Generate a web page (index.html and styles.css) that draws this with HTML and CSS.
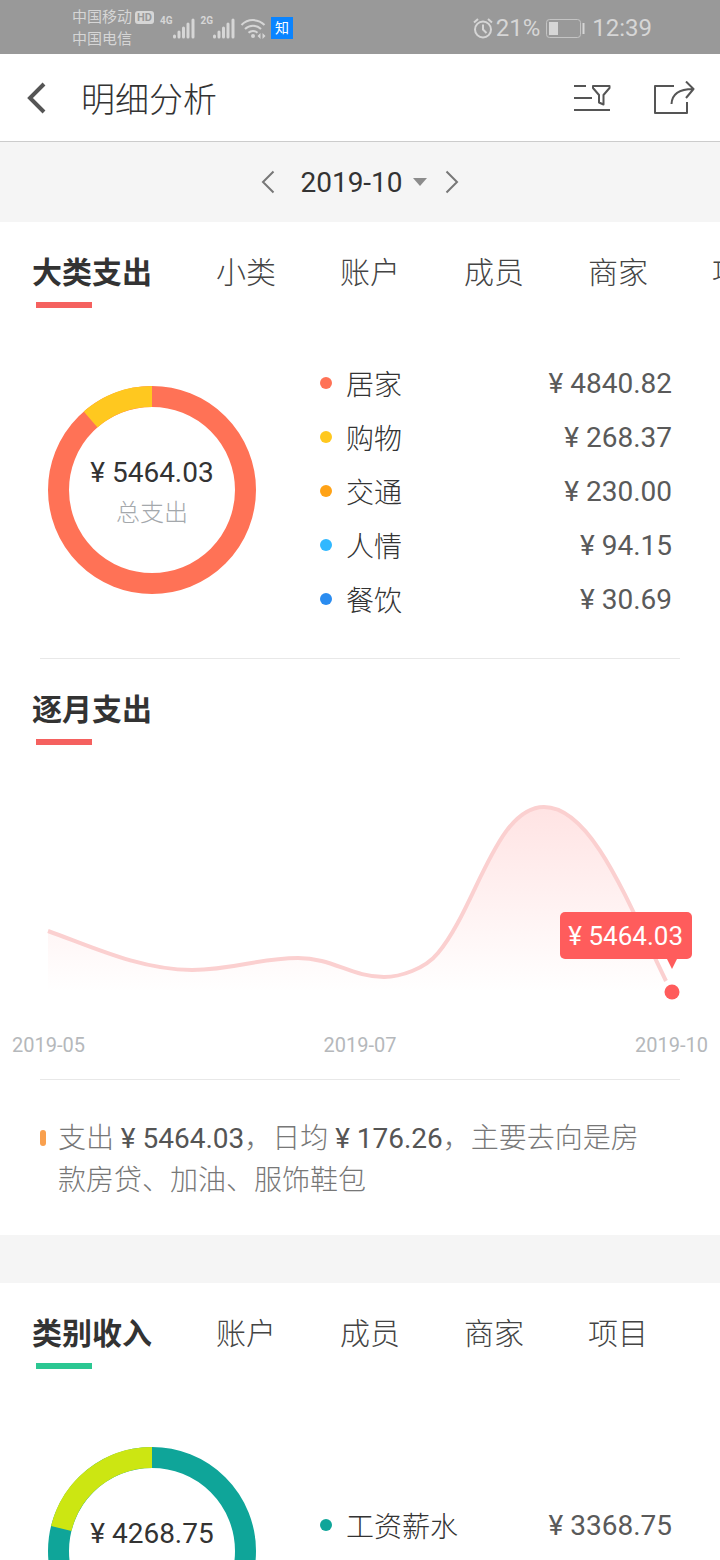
FILE: index.html
```html
<!DOCTYPE html>
<html lang="zh-CN">
<head>
  <meta charset="UTF-8" />
  <meta name="viewport" content="width=device-width, initial-scale=1" />
  <title>明细分析</title>
  <link rel="stylesheet" href="styles.css">
</head>
<body>
<div class="screen">

  <!-- Status bar -->
  <div class="status-bar">
    <div class="carriers">
      <span>中国移动</span>
      <span>中国电信</span>
    </div>
    <span class="hd">HD</span>
    <span class="net">4G</span>
    <svg class="signal" width="22" height="21" viewBox="0 0 22 21">
      <path d="M1.5 18v1M6 14v5M10.500 10v9M15 6v13M20 2v17" />
    </svg>
    <span class="net net-second">2G</span>
    <svg class="signal" width="22" height="21" viewBox="0 0 22 21">
      <path d="M1.5 18v1M6 14v5M10.500 10v9M15 6v13M20 2v17" />
    </svg>
    <svg class="wifi" width="26" height="21" viewBox="0 0 26 21">
      <path class="wifi-arc" d="M1.500 7a16 16 0 0 1 23 0M5 11a11.500 11.500 0 0 1 16 0M8.500 14.800a6.500 6.500 0 0 1 9 0" />
      <circle cx="13" cy="18" r="2" />
      <path d="M20.500 15v6l-3-3zM22.500 15v6l3-3z" />
    </svg>
    <span class="app-badge">知</span>

    <div class="status-right">
      <svg class="alarm" width="20" height="21" viewBox="0 0 20 21">
        <circle cx="10" cy="11.500" r="8" />
        <path d="M10 6.500v5l3.500 3.500M1 4.500l4-3.500M19 4.500l-4-3.500" />
      </svg>
      <span class="percent">21%</span>
      <svg class="battery" width="39" height="19" viewBox="0 0 39 19">
        <rect class="battery-body" x="0.500" y="0.500" width="34" height="18" rx="3" />
        <rect class="battery-level" x="3" y="3" width="9" height="13" />
        <rect class="battery-level" x="36.500" y="4" width="2" height="11" />
      </svg>
      <span>12:39</span>
    </div>
  </div>

  <!-- Title bar -->
  <header class="title-bar">
    <button class="icon-btn" aria-label="返回">
      <svg width="20" height="32" viewBox="0 0 20 32">
        <path class="back-arrow" d="M17 2L3 16l14 14" />
      </svg>
    </button>
    <h1>明细分析</h1>
    <button class="icon-btn" aria-label="筛选">
      <svg class="line-icon" width="38" height="28" viewBox="0 0 38 28">
        <path d="M1 2h12M1 14h18M1 26h36" />
        <path d="M20 2h16.500v2l-6 7v9.500L26 18.500V11l-6-7z" />
      </svg>
    </button>
    <button class="icon-btn" aria-label="分享">
      <svg class="line-icon" width="42" height="34" viewBox="0 0 42 34">
        <path d="M21 5H2v27h32V21" />
        <path d="M18.500 23C19 13 27 8 40 8M33 0.500L40.500 8 33 17" />
      </svg>
    </button>
  </header>

  <!-- Month picker -->
  <div class="month-bar">
    <button class="icon-btn" aria-label="上个月">
      <svg class="chevron" width="14" height="24" viewBox="0 0 14 24"><path d="M12.500 1.500L2 12l10.500 10.500" /></svg>
    </button>
    <button class="month-btn">2019-10 <span class="caret"></span></button>
    <button class="icon-btn" aria-label="下个月">
      <svg class="chevron" width="14" height="24" viewBox="0 0 14 24"><path d="M1.500 1.500L12 12 1.500 22.500" /></svg>
    </button>
  </div>

  <main>
    <!-- Expense -->
    <section class="expense">
      <nav class="tabs">
        <button class="tab active">大类支出</button>
        <button class="tab">小类</button>
        <button class="tab">账户</button>
        <button class="tab">成员</button>
        <button class="tab">商家</button>
        <button class="tab">项目</button>
      </nav>

      <div class="breakdown">
        <div class="donut">
          <svg viewBox="0 0 208 208">
            <circle class="ring ring-home" cx="104" cy="104" r="93.500" />
            <circle class="ring ring-other" cx="104" cy="104" r="93.500" pathLength="1000" stroke-dasharray="114 886" stroke-dashoffset="-886" transform="rotate(-90 104 104)" />
          </svg>
          <div class="donut-label">
            <strong>¥ 5464.03</strong>
            <span>总支出</span>
          </div>
        </div>
        <ul class="legend">
          <li><i class="dot home"></i><span>居家</span><b>¥ 4840.82</b></li>
          <li><i class="dot shopping"></i><span>购物</span><b>¥ 268.37</b></li>
          <li><i class="dot traffic"></i><span>交通</span><b>¥ 230.00</b></li>
          <li><i class="dot social"></i><span>人情</span><b>¥ 94.15</b></li>
          <li><i class="dot food"></i><span>餐饮</span><b>¥ 30.69</b></li>
        </ul>
      </div>
      <hr>

      <div class="tabs">
        <h2 class="tab active">逐月支出</h2>
      </div>
      <div class="chart">
        <svg viewBox="0 0 720 288">
          <defs>
            <linearGradient id="area" x1="0" y1="62" x2="0" y2="247" gradientUnits="userSpaceOnUse">
              <stop offset="0" stop-color="#ff5c5c" stop-opacity="0.17" />
              <stop offset="1" stop-color="#ff5c5c" stop-opacity="0" />
            </linearGradient>
          </defs>
          <path fill="url(#area)" d="M48 186C90 201 140 225 192 225C235 225 258 213 298 213C332 213 352 232 384 232C400 232 425 224 438 208C476 163 496 62 544 62C592 62 628 158 666 236L672 247H48z" />
          <path class="chart-line" d="M48 186C90 201 140 225 192 225C235 225 258 213 298 213C332 213 352 232 384 232C400 232 425 224 438 208C476 163 496 62 544 62C592 62 628 158 666 236" />
          <circle class="chart-point" cx="672" cy="247" r="7.500" />
        </svg>
        <div class="tooltip">¥ 5464.03</div>
        <div class="axis">
          <span>2019-05</span>
          <span>2019-07</span>
          <span>2019-10</span>
        </div>
      </div>
      <hr>

      <p class="summary">支出 <b>¥ 5464.03</b>，日均 <b>¥ 176.26</b>，主要去向是房款房贷、加油、服饰鞋包</p>
    </section>

    <!-- Income -->
    <section class="income">
      <nav class="tabs">
        <button class="tab active">类别收入</button>
        <button class="tab">账户</button>
        <button class="tab">成员</button>
        <button class="tab">商家</button>
        <button class="tab">项目</button>
      </nav>

      <div class="breakdown">
        <div class="donut">
          <svg viewBox="0 0 208 208">
            <circle class="ring ring-salary" cx="104" cy="104" r="93.500" />
            <circle class="ring ring-extra" cx="104" cy="104" r="93.500" pathLength="1000" stroke-dasharray="211 789" stroke-dashoffset="-789" transform="rotate(-90 104 104)" />
          </svg>
          <div class="donut-label">
            <strong>¥ 4268.75</strong>
          </div>
        </div>
        <ul class="legend">
          <li><i class="dot salary"></i><span>工资薪水</span><b>¥ 3368.75</b></li>
        </ul>
      </div>
    </section>
  </main>

</div>
</body>
</html>
```
FILE: styles.css
```css
* {
  box-sizing: border-box;
}

body {
  margin: 0;
  font-family: Roboto, "Noto Sans CJK SC", sans-serif;
  font-size: 28px;
  color: #333;
  background: #f5f5f5;
}

h1, h2, p, ul {
  margin: 0;
  padding: 0;
}

button {
  font: inherit;
  color: inherit;
  background: none;
  border: none;
  padding: 0;
  cursor: pointer;
}

svg {
  display: block;
  fill: none;
}

hr {
  height: 1px;
  margin: 0 40px;
  border: none;
  background: #e8e8e8;
}

.screen {
  height: 100vh;
  overflow: hidden auto;
  scrollbar-width: none;
}

/* Status bar */
.status-bar {
  display: flex;
  align-items: center;
  height: 54px;
  padding: 2px 68px 0 72px;
  background: #999;
  color: #d6d6d6;
}

.carriers {
  display: flex;
  flex-direction: column;
  font-size: 15px;
  line-height: 22px;
}

.hd {
  align-self: flex-start;
  margin: 9px 6px 0 3px;
  padding: 0 2px;
  border-radius: 3px;
  background: #d6d6d6;
  color: #999;
  font-size: 11px;
  line-height: 13px;
  font-weight: 700;
}

.net {
  align-self: flex-start;
  margin-top: 13px;
  font-size: 10px;
  line-height: 12px;
  font-weight: 700;
}

.net-second {
  margin-left: 6px;
}

.signal {
  stroke: #d6d6d6;
  stroke-width: 3;
  stroke-linecap: round;
}

.wifi {
  margin: 0 5px;
  fill: #d6d6d6;
}

.wifi-arc {
  fill: none;
  stroke: #d6d6d6;
  stroke-width: 2;
}

.app-badge {
  width: 22px;
  background: #0a84ff;
  color: #fff;
  font-size: 14px;
  line-height: 22px;
  text-align: center;
}

.status-right {
  display: flex;
  align-items: center;
  margin-left: auto;
  font-size: 24px;
}

.alarm {
  margin-right: 3px;
  stroke: #d6d6d6;
  stroke-width: 2;
}

.battery {
  margin: 0 7px 0 6px;
}

.battery-body {
  stroke: #c4c4c4;
}

.battery-level {
  fill: #d6d6d6;
}

/* Title bar */
.title-bar {
  display: flex;
  align-items: center;
  height: 88px;
  padding: 0 25px 0 27px;
  background: #fff;
  border-bottom: 1px solid #ccc;
}

.title-bar h1 {
  flex: 1;
  margin-left: 34px;
  padding-top: 4px;
  font-size: 34px;
  line-height: 48px;
  font-weight: 300;
}

.title-bar .icon-btn + .icon-btn {
  margin-left: 42px;
}

.back-arrow {
  stroke: #555;
  stroke-width: 4;
}

.line-icon {
  stroke: #555;
  stroke-width: 2;
  stroke-linejoin: round;
}

/* Month picker */
.month-bar {
  display: flex;
  justify-content: center;
  align-items: center;
  gap: 18px;
  height: 80px;
}

.month-btn {
  display: flex;
  align-items: center;
  gap: 10px;
  padding-left: 7px;
}

.caret {
  border: 7px solid transparent;
  border-top: 8px solid #8c8c8c;
  border-bottom: none;
}

.chevron {
  stroke: #777;
  stroke-width: 2;
}

/* Tabs and section titles */
.expense, .income {
  background: #fff;
}

.income {
  margin-top: 48px;
}

.tabs {
  display: flex;
  gap: 64px;
  height: 86px;
  padding: 31px 0 0 32px;
  overflow: hidden;
}

.tab {
  position: relative;
  flex: none;
  height: 55px;
  padding-bottom: 15px;
  font-size: 30px;
  line-height: 40px;
  font-weight: 300;
  color: #444;
}

.tab.active {
  font-weight: 700;
  color: #333;
}

.tab.active::after {
  content: "";
  position: absolute;
  left: 4px;
  bottom: 0;
  width: 56px;
  height: 6px;
  background: #f5615f;
}

.income .tab.active::after {
  background: #2bc792;
}

/* Donut and legend */
.breakdown {
  display: flex;
  align-items: flex-start;
  padding: 48px 48px 32px;
}

.donut {
  position: relative;
  flex: none;
  width: 208px;
  margin: 30px 64px 0 0;
}

.ring {
  stroke-width: 21;
}

.ring-home {
  stroke: #ff7256;
}

.ring-other {
  stroke: #ffc81f;
}

.ring-salary {
  stroke: #0fa599;
}

.ring-extra {
  stroke: #cce612;
}

.donut-label {
  position: absolute;
  top: 67px;
  left: 0;
  right: 0;
  text-align: center;
  line-height: 40px;
}

.donut-label strong {
  display: block;
  font-weight: 400;
}

.donut-label span {
  display: block;
  font-size: 24px;
  font-weight: 300;
  color: #a4a8ac;
}

.legend {
  flex: 1;
  list-style: none;
}

.income .legend {
  margin-top: 81px;
}

.legend li {
  display: flex;
  align-items: center;
  height: 54px;
}

.legend span {
  flex: 1;
  font-weight: 300;
}

.legend b {
  font-weight: 400;
  color: #5a5a5a;
}

.dot {
  width: 12px;
  height: 12px;
  margin-right: 14px;
  border-radius: 50%;
}

.home {
  background: #ff7256;
}

.shopping {
  background: #ffc81f;
}

.traffic {
  background: #ffa216;
}

.social {
  background: #30b8ff;
}

.food {
  background: #2a8cf0;
}

.salary {
  background: #0fa599;
}

/* Monthly chart */
.chart {
  position: relative;
  padding-bottom: 22px;
}

.chart-line {
  stroke: #fbd0d0;
  stroke-width: 4;
}

.chart-point {
  fill: #ff5c5c;
}

.tooltip {
  position: absolute;
  top: 167px;
  right: 28px;
  padding: 1px 9px 0 8px;
  border-radius: 5px;
  background: #ff5c5c;
  color: #fff;
  font-size: 26px;
  line-height: 46px;
}

.tooltip::after {
  content: "";
  position: absolute;
  top: 100%;
  right: 15px;
  border: 5px solid transparent;
  border-top: 10px solid #ff5c5c;
  border-bottom: none;
}

.axis {
  display: flex;
  justify-content: space-between;
  padding: 0 12px;
  font-size: 20px;
  line-height: 24px;
  color: #b5b8bb;
}

/* Summary */
.summary {
  position: relative;
  padding: 38px 60px 33px 58px;
  line-height: 42px;
  font-weight: 300;
  color: #777;
}

.summary::before {
  content: "";
  position: absolute;
  top: 50px;
  left: 40px;
  width: 6px;
  height: 16px;
  border-radius: 3px;
  background: #f9a04e;
}

.summary b {
  font-weight: 400;
  color: #555;
}
```
